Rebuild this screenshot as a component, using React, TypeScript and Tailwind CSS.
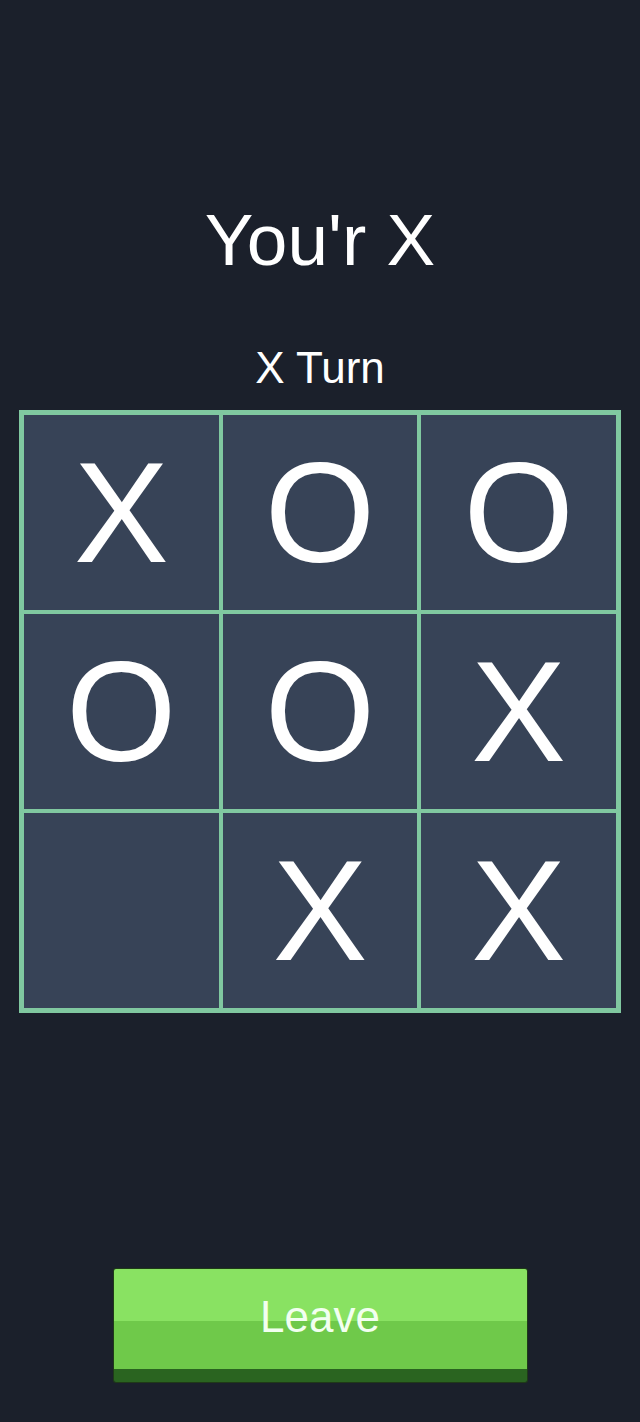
import React from 'react';

const board = ['X', 'O', 'O', 'O', 'O', 'X', '', 'X', 'X'];

export default function App() {
  return (
    <div
      className="w-full min-h-[1422px] bg-[#1b202b] text-white flex flex-col items-center"
      style={{ fontFamily: '"Liberation Sans", Arial, sans-serif' }}
    >
      <h1 className="mt-[203px] text-[73px] leading-none">You'r X</h1>
      <p className="mt-[70px] text-[44px] leading-none">X Turn</p>
      <div className="mt-[20px] w-[602px] grid grid-cols-3 gap-[4px] p-[5px] bg-[#80c8a0]">
        {board.map((v, i) => (
          <button
            key={i}
            className="h-[195px] bg-[#374357] flex items-center justify-center text-[142px] leading-none text-white"
          >
            {v}
          </button>
        ))}
      </div>
      <button className="mt-[256px] w-[413px] h-[113px] flex flex-col rounded-[2px] overflow-hidden shadow-[0_0_0_1px_#1f3a18]">
        <div className="h-[100px] w-full flex items-center justify-center bg-[linear-gradient(to_bottom,#89e262_0%,#89e262_52%,#6fc94a_52%,#6fc94a_100%)]">
          <span className="text-[44px] leading-none text-[#f2fff0] -mt-[4px]">Leave</span>
        </div>
        <div className="h-[13px] w-full bg-[#2a6420]" />
      </button>
    </div>
  );
}
